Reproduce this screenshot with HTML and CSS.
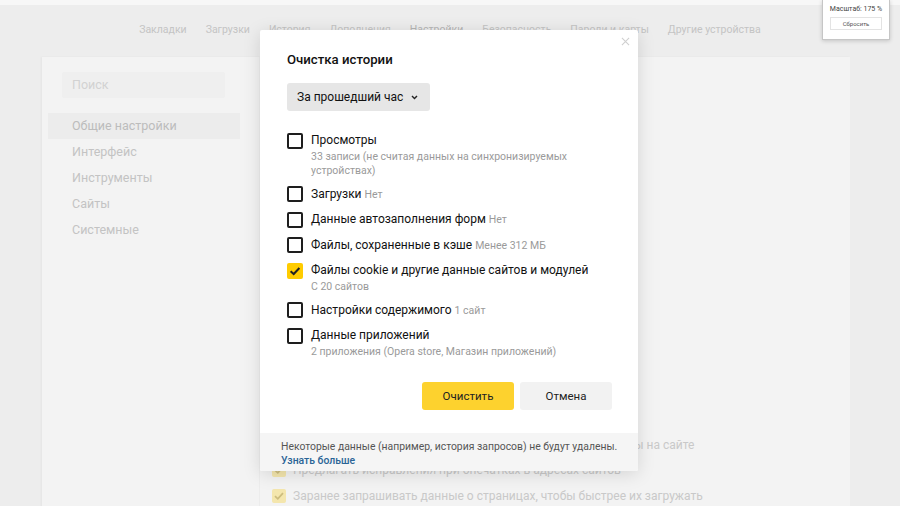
FILE: index.html
```html
<!DOCTYPE html>
<html lang="ru">
<head>
<meta charset="utf-8">
<title>Настройки</title>
<link rel="stylesheet" href="styles.css">
</head>
<body>
<div class="strip"></div>

<nav class="tabs">
  <span class="tab">Закладки</span>
  <span class="tab">Загрузки</span>
  <span class="tab">История</span>
  <span class="tab">Дополнения</span>
  <span class="tab tab-active">Настройки</span>
  <span class="tab">Безопасность</span>
  <span class="tab">Пароли и карты</span>
  <span class="tab">Другие устройства</span>
</nav>

<main class="panel">
  <aside class="sidebar">
    <div class="search">Поиск</div>
    <ul class="menu">
      <li class="menu-item menu-current">Общие настройки</li>
      <li class="menu-item">Интерфейс</li>
      <li class="menu-item">Инструменты</li>
      <li class="menu-item">Сайты</li>
      <li class="menu-item">Системные</li>
    </ul>
  </aside>
  <section class="content">
    <div class="setting">
      <span class="setting-box"></span>
      <span>Показывать предупреждение при вводе номера вашей карты на сайте</span>
    </div>
    <div class="setting">
      <span class="setting-box on"><svg viewBox="0 0 14 14"><path d="M3 7.2 L5.8 9.8 L11 4.2"/></svg></span>
      <span>Предлагать исправления при опечатках в адресах сайтов</span>
    </div>
    <div class="setting">
      <span class="setting-box on"><svg viewBox="0 0 14 14"><path d="M3 7.2 L5.8 9.8 L11 4.2"/></svg></span>
      <span>Заранее запрашивать данные о страницах, чтобы быстрее их загружать</span>
    </div>
  </section>
</main>

<div class="dialog" role="dialog">
  <button class="dialog-close" aria-label="Закрыть">
    <svg viewBox="0 0 10 10"><path d="M1 1 L9 9 M9 1 L1 9"/></svg>
  </button>
  <div class="dialog-body">
    <h2 class="dialog-title">Очистка истории</h2>
    <div class="period">
      <span>За прошедший час</span>
      <svg class="chevron" viewBox="0 0 8 6"><path d="M1 1.2 L4 4.2 L7 1.2"/></svg>
    </div>
    <ul class="options">
      <li class="option">
        <span class="box"></span>
        <span class="option-label">Просмотры</span>
        <span class="option-sub">33 записи (не считая данных на синхронизируемых устройствах)</span>
      </li>
      <li class="option">
        <span class="box"></span>
        <span class="option-label">Загрузки <span class="note">Нет</span></span>
      </li>
      <li class="option">
        <span class="box"></span>
        <span class="option-label">Данные автозаполнения форм <span class="note">Нет</span></span>
      </li>
      <li class="option">
        <span class="box"></span>
        <span class="option-label">Файлы, сохраненные в кэше <span class="note">Менее 312 МБ</span></span>
      </li>
      <li class="option">
        <span class="box box-checked"><svg viewBox="0 0 16 16"><path d="M3.6 8.2 L6.7 11 L12.4 5"/></svg></span>
        <span class="option-label">Файлы cookie и другие данные сайтов и модулей</span>
        <span class="option-sub">С 20 сайтов</span>
      </li>
      <li class="option">
        <span class="box"></span>
        <span class="option-label">Настройки содержимого <span class="note">1 сайт</span></span>
      </li>
      <li class="option">
        <span class="box"></span>
        <span class="option-label">Данные приложений</span>
        <span class="option-sub">2 приложения (Opera store, Магазин приложений)</span>
      </li>
    </ul>
    <div class="actions">
      <button class="btn btn-primary">Очистить</button>
      <button class="btn">Отмена</button>
    </div>
  </div>
  <div class="dialog-footer">
    <div>Некоторые данные (например, история запросов) не будут удалены.</div>
    <a class="more">Узнать больше</a>
  </div>
</div>

<div class="zoom-popup">
  <div class="zoom-value">Масштаб: 175 %</div>
  <button class="zoom-reset">Сбросить</button>
</div>
</body>
</html>
```

FILE: styles.css
```css
* {
  box-sizing: border-box;
}

html, body {
  margin: 0;
  height: 100%;
}

body {
  width: 900px;
  height: 506px;
  overflow: hidden;
  position: relative;
  background: #ededed;
  font-family: Roboto, "Noto Sans", sans-serif;
  color: #000;
}

.strip {
  height: 5px;
  background: #f7f7f7;
}

/* top navigation */
.tabs {
  display: flex;
  justify-content: center;
  gap: 19px;
  height: 52px;
  padding: 17px 0 0;
  font-size: 10.5px;
  line-height: 15px;
  color: #c4c4c4;
}

.tab-active {
  color: #b5b5b5;
}

/* settings page */
.panel {
  display: flex;
  margin: 0 50px 0 42px;
  height: 460px;
  background: #f3f3f3;
  box-shadow: -1px 0 2px rgba(0, 0, 0, 0.04);
}

.sidebar {
  width: 218px;
  padding: 15px 0 0 6px;
  border-right: 1px solid #ececec;
}

.search {
  margin: 0 34px 0 14px;
  height: 26px;
  padding-left: 10px;
  line-height: 26px;
  font-size: 12.5px;
  color: #d2d2d2;
  background: #efefef;
  border-radius: 2px;
}

.menu {
  list-style: none;
  margin: 15px 0 0;
  padding: 0;
}

.menu-item {
  height: 26px;
  line-height: 26px;
  padding-left: 24px;
  font-size: 12.5px;
  color: #c3c3c3;
}

.menu-current {
  width: 192px;
  background: #ececec;
  color: #bcbcbc;
}

.content {
  flex: 1;
  padding: 375px 0 0 12px;
}

.setting {
  display: flex;
  align-items: center;
  gap: 7px;
  height: 25.5px;
  font-size: 12px;
  color: #c9c9c9;
  white-space: nowrap;
}

.setting-box {
  width: 14px;
  height: 14px;
  border-radius: 2px;
  flex: none;
}

.setting-box.on {
  background: #f4e6ad;
}

.setting-box svg {
  display: block;
  width: 14px;
  height: 14px;
  fill: none;
  stroke: #cdbd7e;
  stroke-width: 1.8;
}

/* clear history dialog */
.dialog {
  position: absolute;
  left: 260px;
  top: 30px;
  width: 378px;
  background: #fff;
  border-radius: 2px;
  box-shadow: 0 3px 18px rgba(0, 0, 0, 0.13);
  overflow: hidden;
}

.dialog-close {
  position: absolute;
  top: 6px;
  right: 7px;
  width: 10px;
  height: 10px;
  padding: 0;
  border: 0;
  background: none;
}

.dialog-close svg {
  display: block;
  width: 9px;
  height: 9px;
  stroke: #cfcfcf;
  stroke-width: 1.2;
}

.dialog-body {
  padding: 21px 26px 23px 27px;
}

.dialog-title {
  margin: 0;
  font-size: 13.2px;
  line-height: 18px;
  font-weight: 500;
  color: #111;
}

.period {
  display: inline-flex;
  align-items: center;
  gap: 8px;
  margin-top: 14px;
  height: 28px;
  padding: 0 12px 0 10px;
  font-size: 12px;
  color: #111;
  background: #e6e6e6;
  border-radius: 3px;
}

.chevron {
  width: 7px;
  height: 5px;
  fill: none;
  stroke: #222;
  stroke-width: 1.7;
}

.options {
  list-style: none;
  margin: 20px 0 0;
  padding: 0;
  display: flex;
  flex-direction: column;
  gap: 6.5px;
}

.option {
  display: grid;
  grid-template-columns: 16px 1fr;
  column-gap: 8px;
}

.box {
  grid-row: 1;
  width: 16px;
  height: 16px;
  margin-top: 1.5px;
  border: 2px solid #1e1e1e;
  border-radius: 2px;
}

.box-checked {
  border: 0;
  background: #ffcc00;
}

.box-checked svg {
  display: block;
  width: 16px;
  height: 16px;
  fill: none;
  stroke: #222;
  stroke-width: 2;
}

.option-label {
  grid-column: 2;
  font-size: 12px;
  line-height: 19px;
  color: #111;
}

.note {
  font-size: 10.5px;
  color: #9a9a9a;
}

.option-sub {
  grid-column: 2;
  font-size: 10.5px;
  line-height: 14px;
  color: #9a9a9a;
  padding-right: 20px;
}

.actions {
  display: flex;
  justify-content: flex-end;
  gap: 6px;
  margin-top: 23px;
}

.btn {
  width: 92px;
  height: 28px;
  border: 0;
  border-radius: 3px;
  background: #f2f2f2;
  font-family: inherit;
  font-size: 11.5px;
  color: #222;
}

.btn-primary {
  background: #fdd22e;
}

.dialog-footer {
  padding: 7px 10px 3px 21px;
  background: #f5f5f5;
  font-size: 10.4px;
  line-height: 14px;
  color: #555;
  white-space: nowrap;
}

.more {
  color: #2a6496;
  font-weight: 500;
}

/* browser zoom indicator */
.zoom-popup {
  position: absolute;
  top: 0;
  left: 822px;
  width: 68px;
  height: 40px;
  padding-top: 4px;
  background: #fff;
  border: 1px solid #c6c6c6;
  border-top: 0;
  box-shadow: 0 1px 4px rgba(0, 0, 0, 0.18);
  text-align: center;
  font-size: 7px;
  line-height: 10px;
  color: #444;
}

.zoom-reset {
  display: block;
  margin: 3px auto 0;
  width: 52px;
  height: 13px;
  padding: 0;
  border: 1px solid #e3e3e3;
  background: #fff;
  font-family: inherit;
  font-size: 6px;
  color: #555;
}
```
